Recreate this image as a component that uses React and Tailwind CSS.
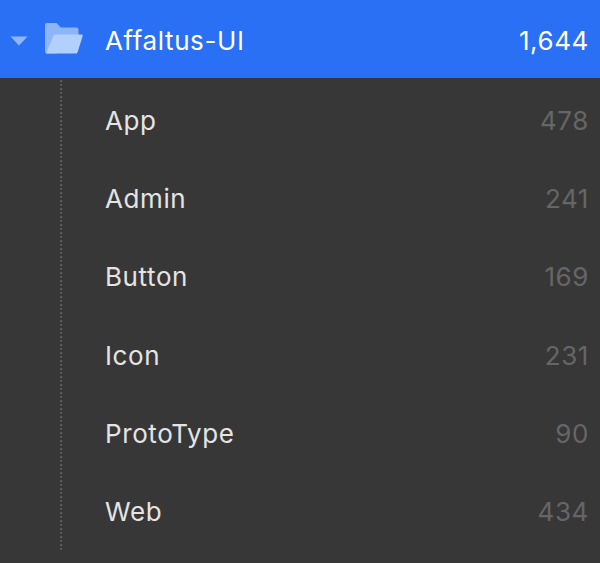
import React from "react";

const rows = [
  ["App", "478"],
  ["Admin", "241"],
  ["Button", "169"],
  ["Icon", "231"],
  ["ProtoType", "90"],
  ["Web", "434"],
];

export default function App() {
  return (
    <div className="w-[600px] h-[563px] overflow-hidden bg-[#373737] font-['Inter',sans-serif] text-[26px] tracking-[0.6px]">
      <div className="flex items-center h-[78px] bg-[#2a70f5] pr-[11px] pt-[3px]">
        <svg width="18" height="10" viewBox="0 0 18 10" className="ml-[10px] mt-[1px]">
          <path d="M0.5 0.5H17.5L9 9.5Z" fill="#8fb6f9" />
        </svg>
        <svg width="38" height="31" viewBox="0 0 38 31" className="ml-[17px] -mt-[4px]">
          <path d="M0 2A2 2 0 0 1 2 0H11.5L16 4.5H31.5A2 2 0 0 1 33.5 6.5V20H12V30.5H2A2 2 0 0 1 0 28.5Z" fill="#8db5fa" />
          <path d="M9 11.5H36.3A1.3 1.3 0 0 1 37.6 13.2L32.7 29A2 2 0 0 1 30.7 30.5H1Z" fill="#b3d0fd" />
        </svg>
        <span className="ml-[22px] text-white">Affaltus-UI</span>
        <span className="ml-auto text-white">1,644</span>
      </div>
      <div className="ml-[60px] mt-[2px] h-[470px] border-l-2 border-dotted border-[#5a5a5a] flex flex-col">
        {rows.map(([name, count]) => (
          <div key={name} className="flex-1 flex items-center pl-[43px] pr-[11px] pt-[2px]">
            <span className="text-[#e4e4e4]">{name}</span>
            <span className="ml-auto text-[#666666]">{count}</span>
          </div>
        ))}
      </div>
    </div>
  );
}
